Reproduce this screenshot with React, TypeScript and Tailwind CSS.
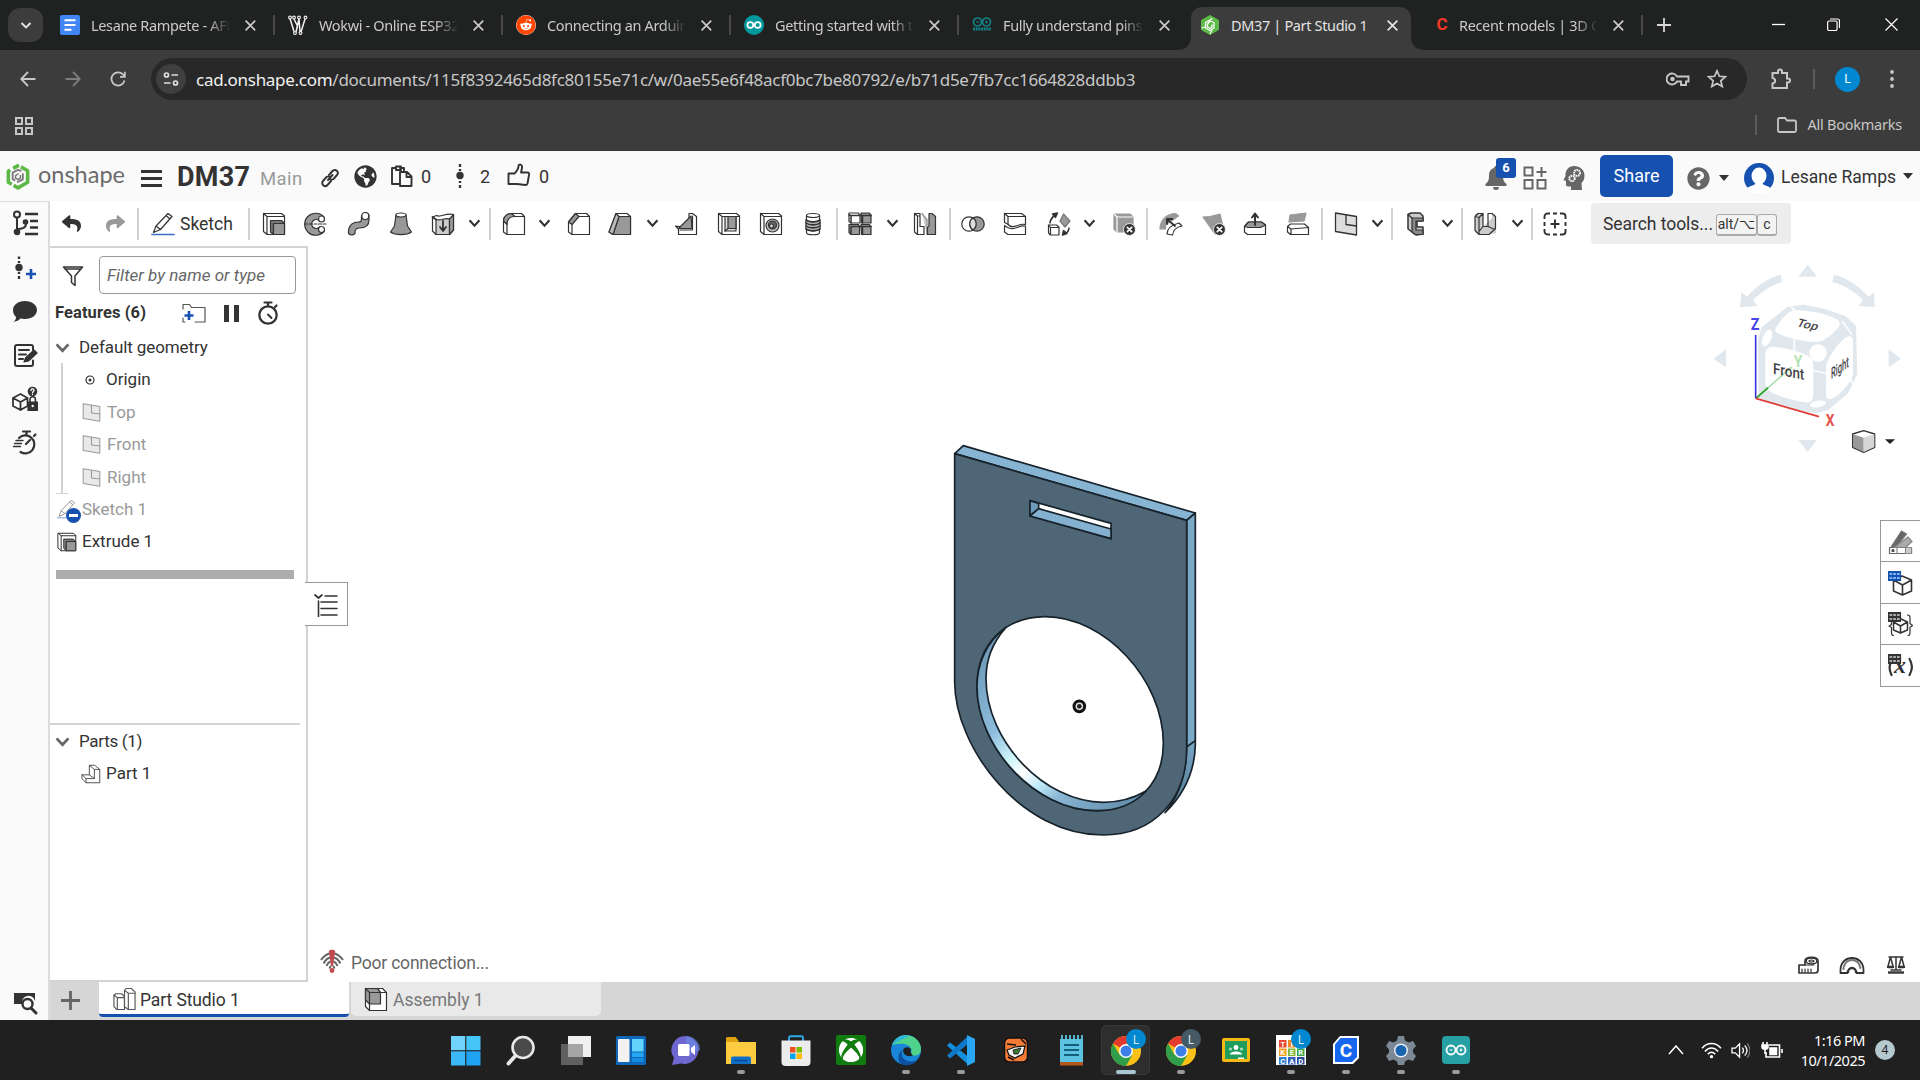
import React from "react";
import { FaGlobeAmericas, FaXbox, FaReddit, FaQuestionCircle, FaReply, FaShare } from "react-icons/fa";

type Kids = { children?: React.ReactNode };

/* 24x24 line icon with the shared CAD stroke style */
function Ic({ children, className = "w-6 h-6", vb = "0 0 24 24" }: Kids & { className?: string; vb?: string }) {
  return (
    <svg viewBox={vb} className={`${className} shrink-0`} fill="none" stroke="#333" strokeWidth="1.2" strokeLinejoin="round" strokeLinecap="round">
      {children}
    </svg>
  );
}

/* ---------- browser chrome ---------- */

const Docs = () => (
  <svg viewBox="0 0 20 20" className="h-5 w-5">
    <rect width="20" height="20" rx="2" fill="#4285f4" />
    <path d="M4.5 5.2h11M4.5 10h11M4.5 14.8h7" stroke="#fff" strokeWidth="2" />
  </svg>
);
const Wokwi = () => (
  <svg viewBox="0 0 20 20" className="h-5 w-5" fill="none" stroke="#f2f2f2" strokeWidth="1.5">
    <path d="M2 3.5l4 13M6 4l3.5 7L8 17M11 4l1 13M17 4l-4 13M11 4l-3 13" />
    <g fill="#202221" strokeWidth="1.1">
      <circle cx="2" cy="2.5" r="1.4" /><circle cx="6" cy="2.5" r="1.4" /><circle cx="11" cy="2.5" r="1.4" /><circle cx="17.5" cy="2.5" r="1.4" />
      <circle cx="7" cy="18" r="1.4" /><circle cx="12.5" cy="18" r="1.4" />
    </g>
  </svg>
);
const Reddit = () => <FaReddit className="h-5 w-5 rounded-full bg-white text-[#ff4500]" />;
const Infinity2 = () => (
  <g fill="none" strokeWidth="1.7">
    <circle cx="6.3" cy="10" r="2.9" />
    <circle cx="13.7" cy="10" r="2.9" />
  </g>
);
const Arduino = () => (
  <svg viewBox="0 0 20 20" className="h-5 w-5" stroke="#fff">
    <circle cx="10" cy="10" r="10" fill="#00979d" stroke="none" />
    <Infinity2 />
  </svg>
);
const Arduino2 = () => (
  <svg viewBox="0 0 20 20" className="h-5 w-5" fill="none" stroke="#128188" strokeWidth="1.7">
    <circle cx="5.5" cy="7" r="4" />
    <circle cx="14.5" cy="7" r="4" />
    <path d="M4 7h3M13 7h3M14.5 5.5v3" strokeWidth="1" />
    <path d="M1 14h18" strokeWidth="3" strokeDasharray="2 .7" />
  </svg>
);
function OnshapeMark({ className, inner }: { className: string; inner: string }) {
  return (
    <svg viewBox="0 0 24 28" className={className} fill="none" strokeLinejoin="round">
      <path d="M13 2.200L7 5.600M4 7.400L2 8.600V20l3.500 2M7.500 23.200l4.500 2.600L22 20V8l-7-4" stroke="#5db947" strokeWidth="3.700" />
      <path d="M15.500 8.500L12 7 6.500 10v6.500l2.500 2M11 20l6-3v-6.500" stroke={inner} strokeWidth="1.900" />
      <path d="M12.500 11L9.500 13v3l2.500 1.200 2.500-1.500V12.500" stroke={inner} strokeWidth="1.500" />
    </svg>
  );
}
const OnshapeFav = () => (
  <svg viewBox="0 0 20 20" className="h-5 w-5" fill="none" strokeLinejoin="round">
    <path d="M10 .5l8.500 4.800v9.400L10 19.500 1.500 14.700V5.300z" fill="#5db947" stroke="#5db947" />
    <path d="M12.500 3.500L5.500 7.500v5.500l4.500 2.500 4-2.500V7.500L10 6 7.500 9v3l2.500 1.500 2-1.500V9.500" stroke="#fff" strokeWidth="1.300" />
    <path d="M10 19l2-4M1.500 13l4-1" stroke="#fff" strokeWidth="1.100" />
  </svg>
);
const RedC = () => (
  <span className="flex h-5 w-5 items-center justify-center pl-2 font-['Roboto',sans-serif] text-[17px] font-bold text-[#f23a2b]">C</span>
);

const tabs = [
  { icon: <Docs />, title: "Lesane Rampete - AFM", sep: true },
  { icon: <Wokwi />, title: "Wokwi - Online ESP32", sep: true },
  { icon: <Reddit />, title: "Connecting an Arduino", sep: true },
  { icon: <Arduino />, title: "Getting started with the", sep: true },
  { icon: <Arduino2 />, title: "Fully understand pins o", sep: false },
  { icon: <OnshapeFav />, title: "DM37 | Part Studio 1", sep: false, active: true },
  { icon: <RedC />, title: "Recent models | 3D CA", sep: true },
];

const Cross = ({ className }: { className: string }) => (
  <svg viewBox="0 0 12 12" className={className} stroke="currentColor" fill="none">
    <path d="M1.500 1.500l9 9M10.500 1.500l-9 9" strokeWidth="1.600" />
  </svg>
);

function TabStrip() {
  return (
    <div className="flex h-[50px] bg-[#202221] pl-2 text-[#c9cac9]">
      <div className="mt-2 flex h-[34px] w-[35px] items-center justify-center rounded-xl bg-[#3b3c3b]">
        <svg viewBox="0 0 12 12" className="h-3 w-3" fill="none" stroke="#e3e3e3" strokeWidth="1.900"><path d="M1.500 4l4.500 4.500L10.500 4" /></svg>
      </div>
      <div className="ml-1 flex">
        {tabs.map((t) => (
          <div key={t.title} className="relative flex h-[50px] w-[228px] items-center pl-[13px]">
            {t.active && (
              <svg viewBox="0 0 248 43" className="absolute -left-[10px] top-[7px] h-[43px] w-[248px]">
                <path d="M0 43c9 0 14-5 14-14V12C14 4 19 0 26 0h196c7 0 12 4 12 12v17c0 9 5 14 14 14z" fill="#3c3c3c" />
              </svg>
            )}
            <span className="relative">{t.icon}</span>
            <span className={`relative ml-[11px] w-[141px] overflow-hidden whitespace-nowrap font-['Noto_Sans',sans-serif] text-[14.500px] leading-6 tracking-[-0.350px] ${t.active ? "text-[#e3e3e3]" : "[mask-image:linear-gradient(to_right,#000_84%,transparent)]"}`}>{t.title}</span>
            <Cross className={`relative ml-[14px] h-[13px] w-[13px] ${t.active ? "text-[#e3e3e3]" : "text-[#c9cac9]"}`} />
            {t.sep && <span className="ml-[16px] h-5 w-[2px] bg-[#474847]" />}
          </div>
        ))}
      </div>
      <div className="flex items-center">
        <svg viewBox="0 0 14 14" className="ml-[14px] h-[14px] w-[14px]" stroke="#d8d8d8" strokeWidth="1.800"><path d="M7 0v14M0 7h14" /></svg>
      </div>
      <div className="ml-auto flex items-center pb-[2px] pr-[22px] text-white">
        <svg viewBox="0 0 13 13" className="h-[13px] w-[13px]" stroke="#fff" strokeWidth="1.300"><path d="M0 6.500h13" /></svg>
        <svg viewBox="0 0 13 13" className="ml-[42px] h-[13px] w-[13px]" fill="none" stroke="#fff" strokeWidth="1.200"><rect x=".6" y="3" width="9.500" height="9.500" rx="1.500" /><path d="M3 1h7.500a2 2 0 0 1 2 2v7" /></svg>
        <svg viewBox="0 0 13 13" className="ml-[45px] h-[13px] w-[13px]" stroke="#fff" strokeWidth="1.200"><path d="M.5 .5l12 12M12.500 .5l-12 12" /></svg>
      </div>
    </div>
  );
}

function AddressBar() {
  return (
    <div className="flex h-[58px] items-center bg-[#3c3c3c] pl-5">
      <svg viewBox="0 0 16 16" className="h-4 w-4" fill="none" stroke="#c7c7c7" strokeWidth="1.800"><path d="M15.500 8H1.500M8 1L1.200 8 8 15" /></svg>
      <svg viewBox="0 0 16 16" className="ml-[29px] h-4 w-4" fill="none" stroke="#7d7d7d" strokeWidth="1.800"><path d="M.5 8h14M8 1l6.800 7L8 15" /></svg>
      <svg viewBox="0 0 16 16" className="ml-[29px] h-4 w-4" fill="none" stroke="#c7c7c7" strokeWidth="1.800"><path d="M14.500 9.500A6.600 6.600 0 1 1 13 3.500L14.800 5.500M14.800.8v5H10" /></svg>
      <div className="ml-[25px] flex h-[42px] w-[1596px] items-center rounded-full bg-[#282828] pl-[5px]">
        <span className="flex h-[30px] w-[30px] items-center justify-center rounded-full bg-[#3f3f3f]">
          <svg viewBox="0 0 16 16" className="h-4 w-4" fill="none" stroke="#dedede" strokeWidth="1.700"><circle cx="3.500" cy="4" r="2" /><path d="M8.500 4H15M1 12h6.500" /><circle cx="12.500" cy="12" r="2" /></svg>
        </span>
        <span className="ml-[10px] whitespace-nowrap pt-[1px] font-['Noto_Sans',sans-serif] text-[17px] tracking-[-0.285px] text-[#c7c7c7]">
          <span className="text-[#f1f1f1]">cad.onshape.com</span>/documents/115f8392465d8fc80155e71c/w/0ae55e6f48acf0bc7be80792/e/b71d5e7fb7cc1664828ddbb3
        </span>
        <div className="ml-auto flex items-center pr-5">
          <svg viewBox="0 0 24 14" className="h-[14px] w-6" fill="none" stroke="#c7c7c7" strokeWidth="1.900"><path d="M11 4.500A5.500 5.500 0 1 0 11 9.500h4V13h5V9.500h2.500v-5z" /><circle cx="6.500" cy="7" r="1.300" fill="#c7c7c7" /></svg>
          <svg viewBox="0 0 20 20" className="ml-[17px] h-5 w-5" fill="none" stroke="#c7c7c7" strokeWidth="1.700"><path d="M10 1.800l2.400 5.500 6 .5-4.600 4 1.400 5.800L10 14.500l-5.200 3.100 1.400-5.800-4.600-4 6-.5z" /></svg>
        </div>
      </div>
      <svg viewBox="0 0 22 22" className="ml-[23px] h-[22px] w-[22px]" fill="none" stroke="#c7c7c7" strokeWidth="2"><path d="M2.500 5H8V3.500a2 2 0 0 1 4 0V5h5v5.500h1a2 2 0 0 1 0 4h-1V20H2.500v-4.500c3.500-.500 3.500-5 0-5.500z" /></svg>
      <span className="ml-[21px] h-5 w-[2px] bg-[#5c5c5c]" />
      <span className="ml-[20px] flex h-[25px] w-[25px] items-center justify-center rounded-full bg-[#0288d1] font-['Noto_Sans',sans-serif] text-[13px] text-white">L</span>
      <svg viewBox="0 0 4 18" className="ml-[30px] h-[18px] w-1" fill="#c7c7c7"><circle cx="2" cy="2" r="1.900" /><circle cx="2" cy="9" r="1.900" /><circle cx="2" cy="16" r="1.900" /></svg>
    </div>
  );
}

function BookmarksBar() {
  return (
    <div className="flex h-[43px] items-center border-b border-[#353535] bg-[#3c3c3c] pb-[9px] pl-[15px] pr-[18px]">
      <svg viewBox="0 0 18 18" className="mt-[2px] h-[18px] w-[18px]" fill="none" stroke="#c7c7c7" strokeWidth="2"><path d="M1 1h6v6H1zM11 1h6v6h-6zM1 11h6v6H1zM11 11h6v6h-6z" /></svg>
      <span className="ml-auto h-5 w-[2px] bg-[#5c5c5c]" />
      <svg viewBox="0 0 20 16" className="ml-[20px] h-4 w-5" fill="none" stroke="#c7c7c7" strokeWidth="1.800"><path d="M1 2.500A1.500 1.500 0 0 1 2.500 1H8l2 2.500h7.500A1.500 1.500 0 0 1 19 5v8.500a1.500 1.500 0 0 1-1.500 1.500h-15A1.500 1.500 0 0 1 1 13.500z" /></svg>
      <span className="ml-[10px] font-['Noto_Sans',sans-serif] text-[14.500px] tracking-[-0.230px] text-[#c7c7c7]">All Bookmarks</span>
    </div>
  );
}

/* ---------- document header ---------- */

const Caret = ({ className = "" }: { className?: string }) => (
  <span className={`h-0 w-0 border-x-[5px] border-t-[6px] border-x-transparent border-t-[#333] ${className}`} />
);

function DocHeader() {
  return (
    <div className="flex h-[50px] items-center bg-[#fafafa] pl-[6px] text-[#333]">
      <OnshapeMark className="h-[27px] w-[24px]" inner="#777" />
      <span className="ml-[8px] w-[86px] whitespace-nowrap pb-[3px] font-['Lato',sans-serif] text-[23.500px] leading-none text-[#6b6b6b]">onshape</span>
      <span className="ml-[17px] mt-[4px] flex w-[21px] flex-col gap-[4px]">
        <i className="h-[3px] bg-[#333]" /><i className="h-[3px] bg-[#333]" /><i className="h-[3px] bg-[#333]" />
      </span>
      <span className="ml-[15px] mt-[2px] w-[73px] text-[27px] font-bold leading-none tracking-[0.300px]">DM37</span>
      <span className="ml-[10px] mt-[7px] w-[42px] text-[18.500px] leading-none tracking-[0.400px] text-[#999]">Main</span>
      <Ic className="ml-[18px] mt-1 h-5 w-5" vb="0 0 20 20">
        <path d="M8 12l4.500-5M9 7l3.500-4a3 3 0 0 1 4.500 4l-3.500 4a3 3 0 0 1-3.500 0M11 13l-3.500 4A3 3 0 0 1 3 13l3.500-4A3 3 0 0 1 10 9" strokeWidth="1.900" />
      </Ic>
      <FaGlobeAmericas className="ml-[14px] h-[23px] w-[23px]" />
      <Ic className="ml-[14px] h-[22px] w-[22px]" vb="0 0 22 22">
        <path d="M8 19H1V3h4M9 3h4v3M5 1.500h5V5H5z" strokeWidth="1.900" /><path d="M9 7h7l4.500 4.500V21H9zM15.500 7v5h5" strokeWidth="1.900" fill="#fafafa" />
      </Ic>
      <span className="ml-[8px] w-[11px] text-[18px]">0</span>
      <Ic className="ml-[24px] h-6 w-2" vb="0 0 8 24">
        <circle cx="4" cy="11.500" r="3.700" fill="#333" stroke="none" /><path d="M4 0v3M4 5v2M4 17v2M4 21v3" strokeWidth="2.400" strokeLinecap="butt" />
      </Ic>
      <span className="ml-[16px] w-[11px] text-[18px]">2</span>
      <Ic className="ml-[16px] mb-[3px] h-6 w-6" vb="0 0 24 24">
        <path d="M1.500 10.500h6C10 8 11.500 6 11.500 3c0-2 4-2.500 3.500 2l-1 4.500h6.500c1.500 0 2 1.500 1.500 2.500l-1.500 8.500c-.3 1-1 1.500-2 1.500L10 21H1.500z" strokeWidth="1.900" />
      </Ic>
      <span className="ml-[8px] w-[11px] text-[18px]">0</span>

      <div className="ml-auto flex h-full items-center pr-[7px]">
        <div className="relative h-[28px] w-[32px]">
          <svg viewBox="0 0 22 24" className="absolute left-0 top-[4px] h-6 w-[22px]" fill="#666"><path d="M11 0c1.200 0 2 .8 2 2 3.500 1 5 4 5 7.500 0 5 1 6.500 3.500 8.500v2h-21v-2C3 16 4 14.500 4 9.500 4 6 5.500 3 9 2c0-1.200.8-2 2-2zM8 21h6a3 3 0 0 1-6 0z" /></svg>
          <span className="absolute -top-[4px] left-[11px] flex h-5 w-5 items-center justify-center rounded-[3px] bg-[#1651b0] text-[13px] font-bold text-white">6</span>
        </div>
        <svg viewBox="0 0 24 24" className="ml-[6px] mt-1 h-6 w-6" fill="none" stroke="#666" strokeWidth="2"><path d="M1.500 1.500h8v8h-8zM1.500 14h8v8.500h-8zM14.500 14h8v8.500h-8zM18.500 1v10M13.500 6h10" /></svg>
        <svg viewBox="0 0 22 24" className="ml-[16px] mt-1 h-6 w-[22px]" fill="#666">
          <path d="M11 0c6 0 10.500 4 10.500 9.500 0 4-1.500 6-3 7.500l.5 7H8v-3.500H5c-1.500 0-2-1-2-2V15L.5 14 2.500 10C2 4 6 0 11 0z" />
          <circle cx="9" cy="12.500" r="2.700" fill="none" stroke="#fafafa" strokeWidth="2" strokeDasharray="1.600 .6" /><circle cx="14" cy="7" r="3" fill="none" stroke="#fafafa" strokeWidth="2" strokeDasharray="1.600 .6" />
        </svg>
        <span className="ml-[15px] flex h-[42px] w-[73px] items-center justify-center rounded-[5px] bg-[#1651b0] pb-[1px] text-[18px] text-white">Share</span>
        <FaQuestionCircle className="ml-[14px] mt-1 h-[23px] w-[23px] text-[#666]" />
        <Caret className="ml-[9px] mt-1" />
        <svg viewBox="0 0 30 30" className="ml-[15px] mt-1 h-[30px] w-[30px]">
          <circle cx="15" cy="15" r="15" fill="#1651b0" /><ellipse cx="15" cy="13" rx="7.500" ry="8.500" fill="#fff" /><path d="M3 26c2-4 8-3 8.500-6h7c.5 3 6.500 2 8.500 6a15 15 0 0 1-24 0z" fill="#fff" />
        </svg>
        <span className="ml-[7px] mt-[2px] w-[113px] whitespace-nowrap text-[17.500px]">Lesane Ramps</span>
        <Caret className="ml-[9px]" />
      </div>
    </div>
  );
}

/* ---------- CAD toolbar icons ---------- */

const G = "#999";
const ExtrudeShape = () => (
  <>
    <path d="M1.500 1.500h18l3 2.500v18.500H5l-3.500-3zM1.500 1.500L5 4.500v18M5 4.500h17.500" fill="#fff" />
    <path d="M8.500 8.500h11l3 3H11.500v11L8.500 20z" fill="#777" /><path d="M11.500 11.500H22.500v11h-11z" fill={G} />
  </>
);
const Box = () => <path d="M1.500 1.500h18l3 2.500v18.500H5l-3.500-3zM1.500 1.500L5 4.500v18M5 4.500h17.500" fill="#fff" />;
const PlaneShape = ({ s = "#333", f = "#ddd" }: { s?: string; f?: string }) => (
  <g stroke={s} fill={f} strokeWidth="1.300"><path d="M1.500 1l21 3.500v18.500l-21-3.500z" /><path d="M12 3v9.500l10.500 1.500" fill="none" /></g>
);
const ReplaceX = () => (
  <g><circle cx="17.500" cy="17.500" r="6" fill="#333" stroke="#fff" strokeWidth=".8" /><path d="M15.300 15.300l4.400 4.400M19.700 15.300l-4.400 4.400" stroke="#fff" strokeWidth="1.700" /></g>
);

const icons: Record<string, React.ReactNode> = {
  extrude: <ExtrudeShape />,
  revolve: <><path d="M20 5A11 11 0 1 0 20 19.500L15.500 15a4.500 4.500 0 1 1 0-6z" fill={G} /><circle cx="17.500" cy="7" r="3" fill="#fff" /><circle cx="17.500" cy="17.500" r="3" fill="#fff" /><path d="M1 12h22" strokeDasharray="3 1.500" /></>,
  sweep: <><path d="M14.500 3.500v4c0 2-1 2.500-3 2.500-5 0-9 2-10 8.500v3c2 2 4.500 2 6.500 0v-2c.5-3 2-3.500 4.500-3.500 6 0 9.500-2 9.500-8v-5" fill={G} /><circle cx="18.300" cy="4" r="3.500" fill="#fff" /></>,
  loft: <><path d="M7 3l-1.500 11L1.500 20c5 3.500 16 3.500 21 0l-4-6L17 3z" fill={G} /><ellipse cx="12" cy="3" rx="5" ry="2" fill="#fff" /></>,
  importer: <><path d="M1.500 5l4-1.500c5 2.500 8-3 17-1V18l-4 4.500H5L1.500 19z" fill="#fff" /><path d="M5 7.500c5 1.500 9-2 13.500-.5v15.500H5z" fill="#ccc" /><path d="M18.500 7l4-4.500V18l-4 4.500z" fill={G} /><path d="M1.500 5L5 7.500M12 9v9M9 15l3 4 3-4" strokeWidth="1.800" /></>,
  fillet: <><path d="M1.500 20V9c0-5 4-7.500 8-7.500h10l3 3v18H5z" fill="#fff" /><path d="M1.500 9c0-5 4-7.500 8-7.500L13 4.500C8 4.500 5 7 5 12.500z" fill={G} /><path d="M5 12.500v10M13 4.500h9.500" /></>,
  chamfer: <><path d="M1.500 20V10l7-8.500h11l3 3v18H5z" fill="#fff" /><path d="M1.500 10l7-8.500L12 4.500l-7 8z" fill={G} /><path d="M5 12.500v10M12 4.500h10.500" /></>,
  draft: <><path d="M1 20l7-18.500h11l3.500 3v18H5z" fill="#fff" /><path d="M11 4.500h11.500v18H5z" fill={G} /><path d="M1 20l7-18.500 3 3-6 18z" fill="#bbb" /></>,
  rib: <><path d="M1.500 14l3 3v5.500h18V4.500l-4-3H15v13H5z" fill="#fff" /><path d="M17 4L4.500 16.500H18z" fill={G} /><path d="M18.500 4v14H6" /></>,
  shell: <><Box /><path d="M8 4.500h11v14.500H8z" fill="#ddd" /><path d="M11 4.500h8v12h-8z" fill={G} /><path d="M8 19l3-2.500" /></>,
  hole: <><Box /><circle cx="13.500" cy="13.500" r="6.500" fill="#bbb" /><circle cx="13.500" cy="13" r="4" fill="#666" /><circle cx="12.500" cy="14" r="2" fill="#ddd" /></>,
  thread: <><path d="M5.500 3.500v17c0 3 13 3 13 0v-17" fill="#fff" /><path d="M5 8c3 2.500 11 2.500 14 0v9c-3 2.500-11 2.500-14 0z" fill="#bbb" /><ellipse cx="12" cy="3.500" rx="6.500" ry="2" fill="#fff" /><path d="M5 8c3 2.500 11 2.500 14 0M5 11c3 2.500 11 2.500 14 0M5 14c3 2.500 11 2.500 14 0M5 17c3 2.500 11 2.500 14 0" strokeWidth="1.600" /></>,
  pattern: <><path d="M1 1h9l2 2v8H3L1 9.500z" fill="#fff" /><path d="M13 1h8l2 2v8h-9.500zM1 12.500h9.500l1 2v8H3l-2-2zM13 12.500h8l2 2v8h-9.500z" fill={G} /><path d="M1 3l2 .5h9M3 3.500V11M13 3.500h10M3 14.500h20M14.500 4v7M14.500 14.500v8M3 15v7" strokeWidth="1.500" /></>,
  mirror: <><path d="M1.500 1.500H7v13h4v8H4.500l-3-2.500zM1.500 1.500l3 2.500v18.500M4.500 4H7" fill="#fff" /><path d="M9 1.500l5 6v15" strokeDasharray="2 1" fill="#ccc" stroke="#888" /><path d="M22.500 4.500L19 1.500h-3v12l-1.500 2v7h8z" fill={G} /></>,
  boolean: <><circle cx="8" cy="12" r="7.200" fill="#fff" /><circle cx="16" cy="12" r="7.200" fill={G} /><path d="M12 6a7.200 7.200 0 0 1 0 12 7.200 7.200 0 0 1 0-12" fill="#ddd" /></>,
  split: <><path d="M1.500 10.500V1.500h17l4 3v8c-7-2-12 6-18-.5z" fill="#fff" /><path d="M1.500 1.500L5 4.500h17.500M5 4.500v8" /><path d="M1.500 13.500l3 2c8 4 11-3 18-1.500v8.500H5L1.500 20z" fill="#fff" /></>,
  transform: <><path d="M1.500 13h8l2.500 2v8H3.500l-2-2zM1.500 13l2 2.500H12M3.500 15.500V23" fill="#fff" /><path d="M16.500 2l6.500 7-5 6-5-6z" fill={G} stroke="#777" /><path d="M3 11c0-4 2-6 5-8M5.500 2l5-1-2 4.500z" fill="#333" strokeWidth="1.400" /><path d="M22 16c0 3-1.500 4.500-3.500 6M15.500 23l1-4.500 3.500 3z" fill="#333" strokeWidth="1.400" /></>,
  deletePart: <><path d="M2 2h16l3 3v15H5l-3-3z" fill={G} stroke={G} /><path d="M5 20V5h16M2 2l3 3" stroke="#fff" /><ReplaceX /></>,
  modFillet: <><path d="M1 17C1 8 8 1.500 16.500 1.500l3 2.500-13 9v4z" fill={G} stroke={G} /><path d="M8 22c0-5 4-9 12-11l3 3c-6 1-9 5-9.500 9z" fill="#fff" /><path d="M16 14L9 8M8 12V7h5.500" strokeWidth="1.900" /></>,
  delFace: <><path d="M1 5l7-.5L18 2l3 13-8 7z" fill={G} stroke={G} /><ReplaceX /></>,
  moveFace: <><path d="M1.500 14.500l4-4.500h13l4 3v9.500h-18L1.500 20z" fill="#fff" /><path d="M1.500 14.500l4-4.500h13l4 3-5 2.500H5z" fill={G} /><path d="M12 13V3M9 5.500l3-4 3 4" strokeWidth="2" /></>,
  replFace: <><path d="M4 3l16-2-2 8-15 1z" fill={G} stroke={G} /><path d="M1.500 14.500l3-2.500h14l4 3.500v7h-18l-3-2.500zM1.500 14.500l3.500 2.500 17.500-1.500M5 17v5.500" fill="#fff" /></>,
  plane: <PlaneShape />,
  frame: <><path d="M4 2.500L7 1h9l3 3v5h-6v6h6v7l-7 1-8-6z" fill="#ccc" strokeWidth="1.500" /><path d="M8 6h11v3h-7v9h7v4.500H11L8 20z" fill="#888" /><path d="M4 2.500L8 6" /></>,
  sheet: <><path d="M2 2l5-1 3 3v11l9-9V2l4 3v16l-8 1.500H7L2 18z" fill="#ccc" stroke="none" /><path d="M5 1.500h5v13M5 1.500L2 4.500v14l4 4h10l6.500-6V4.500L19 1.500h-4v13M2 4.500l4 1v17M10 14.500l-4 5M10 14.500h5l7 3M6 5.500l4-4" /></>,
  custom: <path d="M1.500 7V4.500a3 3 0 0 1 3-3H7M10 1.500h4M17 1.500h2.500a3 3 0 0 1 3 3V7M22.500 10v4M22.500 17v2.500a3 3 0 0 1-3 3H17M14 22.500h-4M7 22.500H4.500a3 3 0 0 1-3-3V17M1.500 14v-4M12 7.500v9M7.500 12h9" strokeWidth="1.900" strokeLinecap="butt" />,
};

const tools: [string, string][] = [
  ["sep", "ml-[15px]"], ["extrude", "ml-[12px]"], ["revolve", "ml-[18px]"], ["sweep", "ml-[19px]"], ["loft", "ml-[18px]"], ["importer", "ml-[18px]"], ["chev", "ml-[12px]"],
  ["sep", "ml-[8px]"], ["fillet", "ml-[11px]"], ["chev", "ml-[11px]"], ["chamfer", "ml-[16px]"], ["draft", "ml-[17px]"], ["chev", "ml-[13px]"], ["rib", "ml-[15px]"], ["shell", "ml-[19px]"], ["hole", "ml-[18px]"], ["thread", "ml-[18px]"],
  ["sep", "ml-[11px]"], ["pattern", "ml-[10px]"], ["chev", "ml-[13px]"], ["mirror", "ml-[14px]"],
  ["sep", "ml-[12px]"], ["boolean", "ml-[10px]"], ["split", "ml-[18px]"], ["transform", "ml-[20px]"], ["chev", "ml-[11px]"], ["deletePart", "ml-[16px]"],
  ["sep", "ml-[10px]"], ["modFillet", "ml-[11px]"], ["delFace", "ml-[19px]"], ["moveFace", "ml-[17px]"], ["replFace", "ml-[19px]"],
  ["sep", "ml-[11px]"], ["plane", "ml-[11px]"], ["chev", "ml-[12px]"],
  ["sep", "ml-[7px]"], ["frame", "ml-[11px]"], ["chev", "ml-[12px]"],
  ["sep", "ml-[7px]"], ["sheet", "ml-[10px]"], ["chev", "ml-[13px]"],
  ["sep", "ml-[7px]"], ["custom", "ml-[10px]"],
];

const PencilShape = ({ s = "#333", l = "#3a6fc9" }: { s?: string; l?: string }) => (
  <><path d="M2.500 20.500L5 14 17 1.500l4 3L9.500 17.500zM5 14l4.500 3.500M15 3.500l4 3.500" stroke={s} /><path d="M1 22.500h22" stroke={l} strokeWidth="1.700" /></>
);

function Toolbar() {
  return (
    <div className="flex h-[45px] items-center text-[#333]">
      <FaReply className="ml-[12px] mr-[2px] h-[19px] w-[19px] shrink-0" />
      <FaShare className="ml-[23px] mr-[2px] h-[19px] w-[19px] shrink-0 text-[#999]" />
      <span className="ml-[10px] h-8 w-[2px] shrink-0 bg-[#d3d3d3]" />
      <Ic className="ml-[12px] h-6 w-6"><PencilShape /></Ic>
      <span className="ml-[5px] w-[53px] shrink-0 pt-[2px] text-[17.500px]">Sketch</span>
      {tools.map(([name, gap], i) =>
        name === "sep" ? (
          <span key={i} className={`${gap} h-8 w-[2px] shrink-0 bg-[#d3d3d3]`} />
        ) : name === "chev" ? (
          <span key={i} className={`${gap} flex w-[14px] shrink-0 justify-center`}>
            <svg viewBox="0 0 14 10" className="h-[9px] w-[13px]" fill="none" stroke="#333" strokeWidth="2.400"><path d="M1.500 1.500L7 7.500l5.500-6" /></svg>
          </span>
        ) : (
          <span key={i} className={`${gap} h-6 w-6 shrink-0`}><Ic>{icons[name]}</Ic></span>
        )
      )}
      <div className="ml-[24px] flex h-[41px] w-[200px] shrink-0 items-center rounded-[4px] bg-[#ededed] pl-[12px]">
        <span className="w-[113px] whitespace-nowrap pt-[2px] text-[17.500px] tracking-[-0.050px]">Search tools...</span>
        <kbd className="mt-[3px] flex h-[22px] w-[41px] items-center justify-center whitespace-nowrap rounded-[3px] border border-b-2 border-[#aaa] bg-[#f3f3f3] font-['Roboto','DejaVu_Sans',sans-serif] text-[14px]">alt/⌥</kbd>
        <kbd className="mt-[3px] flex h-[22px] w-[20px] items-center justify-center rounded-[3px] border border-b-2 border-[#aaa] bg-[#f3f3f3] font-['Roboto',sans-serif] text-[14px]">c</kbd>
      </div>
    </div>
  );
}

/* ---------- left rail and feature list ---------- */

function LeftRail() {
  return (
    <div className="flex w-[50px] shrink-0 flex-col items-center border-r-2 border-t border-[#dcdcdc] bg-[#fafafa] pl-[1px] pt-[8px]">
      <Ic className="h-[26px] w-[26px]" vb="0 0 26 26"><circle cx="5" cy="4.500" r="3" strokeWidth="2" /><path d="M5 8v12M5 19c6 0 9-2 9-5" strokeWidth="2" /><circle cx="5" cy="22" r="2.700" fill="#333" /><circle cx="13.500" cy="12" r="2.200" fill="#333" /><path d="M13 4h13M18 11h8M18 17.500h8M13 24h13" strokeWidth="2.400" strokeLinecap="butt" /></Ic>
      <Ic className="mt-[20px] h-[26px] w-[26px]" vb="0 0 26 26"><circle cx="7" cy="11.500" r="3.700" fill="#333" stroke="none" /><path d="M7 .5v2.500M7 5v2M7 16v2M7 20v3" strokeWidth="2.400" strokeLinecap="butt" /><path d="M19 13v10M14 18h10" stroke="#1651b0" strokeWidth="2.600" strokeLinecap="butt" /></Ic>
      <Ic className="mt-[17px] h-[25px] w-[26px]" vb="0 0 26 25"><path d="M13 2c7 0 12 4 12 9s-5 9-12 9c-2 0-3-.2-4.500-.5C6.500 21.500 5 22 1.500 23c2-2 2.500-3 2.500-5-2-1.700-3-4-3-7 0-5 5-9 12-9z" fill="#333" stroke="none" /></Ic>
      <Ic className="mt-[18px] h-[26px] w-[26px]" vb="0 0 26 26"><path d="M21 18.500V22a2 2 0 0 1-2 2H5a2 2 0 0 1-2-2V5a2 2 0 0 1 2-2h14a2 2 0 0 1 2 2v3M7 8h10M7 12.500h7M7 17h4" strokeWidth="2" /><path d="M12 20l1.500-4L22 8l3 3-8.500 8z" fill="#333" /></Ic>
      <Ic className="mt-[18px] h-[26px] w-[26px]" vb="0 0 26 26"><path d="M1 12l7.500-4 7 4v8l-7 4L1 20zM1 12l7.500 4 7-4M8.500 16v8" strokeWidth="1.800" /><circle cx="20.500" cy="5.500" r="4.800" fill="#333" stroke="none" /><path d="M19 4.500c0-2.500 3-2 3-.3 0 1.300-1.500 1.200-1.500 2.600M20.500 8.300v.3" stroke="#fff" strokeWidth="1.300" /><path d="M16 16h9.500v8.500H16z" fill="#333" /><path d="M18 16v-2.500a2.700 2.700 0 0 1 5.400 0V16" strokeWidth="1.600" /><circle cx="20.700" cy="20" r="1.200" fill="#fff" stroke="none" /></Ic>
      <Ic className="mt-[18px] h-[26px] w-[26px]" vb="0 0 26 26"><path d="M7 8a9 9 0 1 1 1.500 14M14.500 5V2M11 1.500h7M22 6l1.500-1.500" strokeWidth="2.200" /><path d="M14 14l4-4" strokeWidth="2.200" /><path d="M4 10.500h7M2.500 13.500h7M1.500 16.500h7" strokeWidth="1.400" /></Ic>
      <Ic className="mb-[4px] mt-auto h-[26px] w-[26px]" vb="0 0 26 26"><path d="M2 4h21v8a6.500 6.500 0 0 0-13 3H2z" fill="#333" stroke="none" /><circle cx="15.500" cy="15" r="5" strokeWidth="2.400" fill="#fafafa" /><path d="M19 19l5 5" strokeWidth="3" /></Ic>
      <span className="h-[1px]" />
    </div>
  );
}

const Chevron = () => (
  <svg viewBox="0 0 16 11" className="h-[10px] w-[15px]" fill="none" stroke="#666" strokeWidth="3"><path d="M1.500 1.500L8 8.500l6.500-7" /></svg>
);

function FeaturePanel() {
  return (
    <div className="relative z-10 flex w-[258px] shrink-0 flex-col border-b-2 border-r-2 border-t-2 border-[#d3d3d3] bg-white text-[17px] text-[#333]">
      <div className="mt-[8px] flex h-[38px] items-center pl-[12px]">
        <Ic className="mt-[2px] h-[22px] w-[22px]" vb="0 0 22 22"><path d="M1.500 2h19L13 11v9.500l-3.500-3V11zM3 4h16" strokeWidth="1.500" /></Ic>
        <div className="ml-[15px] flex h-[38px] w-[197px] items-center rounded-[4px] border border-[#999] pl-[7px] italic text-[#666]">
          <span className="whitespace-nowrap pt-[1px] text-[17px]">Filter by name or type</span>
        </div>
      </div>
      <div className="mt-[4px] flex h-[30px] items-center pl-[5px]">
        <span className="w-[127px] text-[16.500px] font-bold tracking-[0.100px]">Features (6)</span>
        <Ic className="h-[22px] w-6" vb="0 0 24 22"><path d="M1 7V2.500h6.500l2 3H23V20H13M1 16v4h2" strokeWidth="1.200" stroke="#555" /><path d="M7 9v9M2.500 13.500h9" stroke="#1651b0" strokeWidth="2.600" strokeLinecap="butt" /></Ic>
        <span className="ml-[18px] flex gap-[5px]"><i className="h-[17px] w-[5px] bg-[#333]" /><i className="h-[17px] w-[5px] bg-[#333]" /></span>
        <Ic className="ml-[18px] h-[24px] w-[22px]" vb="0 0 22 24"><circle cx="11" cy="14" r="8.700" strokeWidth="2.300" /><path d="M11 5V2M7.500 1.500h7M18 6l1.500-1.500" strokeWidth="2.200" /><path d="M11 13.500l3.500 3.500" strokeWidth="2" /></Ic>
      </div>
      <div className="mt-[5px] flex h-[30px] items-center pl-[5px]"><Chevron /><span className="ml-[9px] tracking-[-0.100px]">Default geometry</span></div>
      <div className="flex">
        <div className="ml-[11px] h-[130px] w-[2px] bg-[#d3d3d3]" />
        <div className="flex-1">
          <div className="flex h-[33px] items-center pl-[22px]">
            <Ic className="h-[10px] w-[10px]" vb="0 0 10 10"><circle cx="5" cy="5" r="4" /><circle cx="5" cy="5" r="1.500" fill="#333" stroke="none" /></Ic>
            <span className="ml-[11px]">Origin</span>
          </div>
          {["Top", "Front", "Right"].map((n) => (
            <div key={n} className="flex h-[32.500px] items-center pl-[19px] text-[#999]">
              <Ic className="h-[19px] w-[19px]"><PlaneShape s="#999" f="#e9e9e9" /></Ic>
              <span className="ml-[6px]">{n}</span>
            </div>
          ))}
        </div>
      </div>
      <span className="-mt-[1px] ml-[6px] h-[1px] w-[12px] bg-[#d3d3d3]" />
      <div className="flex h-[32px] items-center pl-[7px] text-[#999]">
        <span className="relative h-[22px] w-[25px]">
          <Ic className="h-[20px] w-[20px]"><PencilShape s="#999" l="#a8c0e8" /></Ic>
          <span className="absolute left-[9px] top-[9px] flex h-[15px] w-[15px] items-center justify-center rounded-full bg-[#1651b0]"><i className="h-[3px] w-[9px] bg-white" /></span>
        </span>
        <span>Sketch 1</span>
      </div>
      <div className="flex h-[33px] items-center pl-[7px]">
        <Ic className="h-[20px] w-[20px]"><ExtrudeShape /></Ic><span className="ml-[5px]">Extrude 1</span>
      </div>
      <div className="ml-[6px] mt-[11px] h-[9px] w-[238px] bg-[#adadad]" />
      <div className="mt-auto h-[2px] w-[250px] bg-[#d3d3d3]" />
      <div className="h-[255px] pt-[1px]">
        <div className="flex h-[32px] items-center pl-[5px]"><Chevron /><span className="ml-[9px] tracking-[-0.300px]">Parts (1)</span></div>
        <div className="flex h-[32px] items-center pl-[31px]">
          <Ic className="h-[20px] w-[20px]"><path d="M1.500 13h8.500V1.500h6.500l6 5v16H6L1.500 18z" fill="#fff" stroke="#555" /><path d="M1.500 13L6 17.500v5M6 17.500h10M10 13l6 4.500V6.500h6.500M10 1.500l6 5" stroke="#555" /></Ic>
          <span className="ml-[5px]">Part 1</span>
        </div>
      </div>
      <div className="absolute left-[255px] top-[334px] flex h-[44px] w-[43px] items-center justify-center border-y border-r border-[#999] bg-white">
        <Ic className="mt-[2px] h-6 w-6" vb="0 0 24 24"><path d="M11 3h12M7 9h16M7 15.500h16M7 22h16M4.500 8v15.500" strokeWidth="1.600" /><path d="M1 2l3.500 3L8 2" strokeWidth="1.700" /></Ic>
      </div>
    </div>
  );
}

/* ---------- 3D canvas ---------- */

function Part() {
  return (
    <svg viewBox="0 0 930 1290" className="absolute left-[612px] top-[174px] h-[430px] w-[310px]" stroke="#17222b" strokeWidth="5" strokeLinejoin="round">
      <defs>
        <linearGradient id="bore" x1="175" y1="700" x2="640" y2="1170" gradientUnits="userSpaceOnUse">
          <stop offset="0" stopColor="#6f9ab8" /><stop offset=".3" stopColor="#8cbbdb" /><stop offset=".44" stopColor="#cdf5fa" /><stop offset=".53" stopColor="#ffffff" /><stop offset=".62" stopColor="#bfeaf8" /><stop offset=".72" stopColor="#8ab6d3" /><stop offset="1" stopColor="#5f8aa8" />
        </linearGradient>
        <linearGradient id="edge" x1="0" y1="960" x2="0" y2="1180" gradientUnits="userSpaceOnUse">
          <stop offset="0" stopColor="#7ba8c6" /><stop offset="1" stopColor="#4f7590" />
        </linearGradient>
      </defs>
      <path d="M104 101L130 77 826 279 800 301z" fill="#87b4d3" />
      <path d="M800 301L826 279V975C824 1055 790 1125 735 1178 775 1130 798 1060 800 985z" fill="url(#edge)" />
      <path fillRule="evenodd" d="M104 101L800 301V985C800 1140 700 1245 550 1245 300 1245 104 980 104 785zM171 800C171 675 250 592 375 590 555 590 730 780 730 970 730 1090 650 1172 530 1172 345 1172 171 980 171 800zM330 242V288L573 356V310z" fill="#4e6676" />
      <path d="M171 800C171 730 200 665 258 622 215 670 198 720 198 775 198 965 375 1147 550 1147 600 1147 640 1135 678 1113 645 1150 592 1172 530 1172 345 1172 171 980 171 800z" fill="url(#bore)" />
      <path d="M330 242V288L356 266V250z" fill="#6d9aba" />
      <path d="M330 288L356 266 573 327V356z" fill="#84b1d0" />
      <path d="M800 981L826 962" />
      <circle cx="478" cy="859" r="16" fill="#ddd" stroke="#111" strokeWidth="9" />
      <circle cx="478" cy="859" r="7" fill="#222" stroke="none" />
    </svg>
  );
}

function ViewCube() {
  return (
    <svg viewBox="0 0 720 720" className="absolute right-0 top-[-6px] h-[240px] w-[240px] font-['Roboto',sans-serif]">
      <g fill="#e0e8ee">
        <path d="M383 74l28 36h-56zM383 636l28-36h-56zM101 356l37-28v54zM663 356l-37-28v54z" />
        <path d="M302 104l5 22c-36 10-60 28-88 54l14 18-53 4 4-45 17 13c30-32 62-56 101-66zM462 104l-5 22c38 10 64 28 92 54l-14 18 49 4-2-45-16 13c-30-32-62-56-104-66z" />
        <path d="M250 265L325 206 372 200 430 212 495 234 522 260 526 400 508 440 500 455 440 506 405 514 290 490 242 470 240 300z" stroke="#e0e8ee" strokeWidth="12" strokeLinejoin="round" />
      </g>
      <g fill="#fff">
        <path d="M335 213c18-7 100 5 135 25 16 10 8 22 0 30-18 20-40 38-65 38-30 0-80-12-108-24-16-8-12-16-6-24 12-18 28-38 44-45z" />
        <path d="M256 345c0-16 8-26 24-25 35 4 70 12 100 26 16 8 20 16 20 32v84c0 18-8 28-26 25-34-6-70-16-96-28-14-8-22-16-22-32z" />
        <path d="M438 385c0-25 35-78 62-94 12-6 19 0 19 12v90c0 16-4 26-14 38-14 18-30 36-46 44-14 6-21 2-21-12z" />
        <ellipse cx="261" cy="294" rx="13" ry="26" transform="rotate(22 261 294)" />
        <circle cx="414" cy="339" r="26" />
        <ellipse cx="414" cy="492" rx="25" ry="10" transform="rotate(-10 414 492)" />
      </g>
      <g stroke="#fff" strokeWidth="3" fill="none"><path d="M343 295v40M400 392l40 9M487 243l28 40" strokeWidth="4" /><path d="M333 200l20 18M508 415l14 20" strokeWidth="6" /></g>
      <g fill="none" strokeWidth="5">
        <path d="M228 475L335 381" stroke="#a9dfa9" /><path d="M228 475L264 443" stroke="#27a627" />
        <path d="M227 475V285" stroke="#3a35e0" /><path d="M227 475L417 530" stroke="#e03a35" />
      </g>
      <g fill="#444" fontSize="37" fontWeight="500">
        <text transform="matrix(1 .2 0 1.250 279 401)" textLength="94" lengthAdjust="spacingAndGlyphs">Front</text>
        <text transform="matrix(1 .22 -.45 .85 347 258)" textLength="62" lengthAdjust="spacingAndGlyphs">Top</text>
        <text transform="matrix(.7 -.5 0 1.250 453 418)" textLength="76" lengthAdjust="spacingAndGlyphs">Right</text>
      </g>
      <g fontSize="52" fontWeight="700"><text x="212" y="270" fill="#4a45e6" textLength="26" lengthAdjust="spacingAndGlyphs">Z</text><text x="437" y="558" fill="#e6504c" textLength="26" lengthAdjust="spacingAndGlyphs">X</text><text x="341" y="380" fontSize="48" fill="#b4e2b4" textLength="26" lengthAdjust="spacingAndGlyphs">Y</text></g>
      <g stroke="#333" strokeWidth="4" strokeLinejoin="round">
        <path d="M518 582l33-10 33 10v40l-33 15-33-15z" fill="#fff" /><path d="M519 583l32 10v43l-32-15z" fill="#999" stroke="none" /><path d="M551 593l32-10v38l-32 15z" fill="#d6d6d6" stroke="none" />
      </g>
      <path d="M615 598h30l-15 14z" fill="#222" />
    </svg>
  );
}

const GridMark = ({ c, l }: { c: string; l: string }) => (
  <g strokeLinecap="butt"><path d="M.5 .5h12v9H.5z" fill={c} stroke={c} /><path d="M1.500 3h2.700M5.200 3h2.700M9 3h2.700M1.500 7h2.700M5.200 7h2.700M9 7h2.700" stroke={l} strokeWidth="2.200" /></g>
);

function RightPanel() {
  return (
    <div className="absolute right-0 top-[274px] flex w-[40px] flex-col border-b border-l border-[#999] bg-white">
      {[
        <><path d="M1.500 17.500h22v6h-22z" fill="#fff" stroke="#666" /><path d="M3 17L13.500 1l5 3L8 17z" fill="#666" stroke="#777" /><path d="M7 17L20 7l4 4.500-6.500 6z" fill="#aaa" stroke="#888" /><path d="M9 17.500v6M17.500 17.500v6h6v-6z" fill="#ccc" stroke="#888" /><circle cx="5" cy="20.500" r="1" /></>,
        <><path d="M14 5l9.500 4v11l-9 4-9-4V9zM5.500 9l9 5 9-5M14.500 14v10" strokeWidth="1.600" fill="#fff" /><GridMark c="#1651b0" l="#7fb6f5" /></>,
        <><path d="M13 7l6.500 3v8l-7 3-7-3v-8zM5.500 10l7 4 7-4M12.500 14v7" strokeWidth="1.500" fill="#fff" /><path d="M3.500 9v3.500L1 14l2.500 1.500V21c0 1.500.5 2.500 2 2.500M19.500 3c2 0 2.500 1 2.500 2.500v6l2.500 2-2.500 2V21c0 1.500-.5 2.500-2 2.500" /><GridMark c="#333" l="#aaa" /></>,
        <><text x="6" y="19" fontSize="24" fontStyle="italic" fontWeight="bold" fontFamily="Liberation Serif, serif" fill="#333" stroke="none">x</text><path d="M3.500 7c-2.500 4-2.500 9 0 14M21.500 5c3 5 3 11 0 16" strokeWidth="2.200" /><GridMark c="#333" l="#aaa" /></>,
      ].map((g, i) => (
        <div key={i} className="flex h-[41.400px] items-center justify-center border-t border-[#999] pt-[2px]">
          <Ic className="h-[25px] w-[25px]" vb="0 0 25 25">{g}</Ic>
        </div>
      ))}
    </div>
  );
}

function Canvas() {
  return (
    <div className="relative flex-1 overflow-hidden bg-white">
      <Part />
      <ViewCube />
      <RightPanel />
      <div className="absolute bottom-[5px] left-[12px] flex items-center text-[17.500px] text-[#666]">
        <Ic className="mb-1 h-[24px] w-[24px]" vb="0 0 24 24">
          <path d="M1 11C4 7 7 5 9.500 4.500M23 11c-3-4-6-6-8.500-6.500M3.500 14.500C5.500 11 8 9 10 8.500M20.500 14.500C18.500 11 16 9 14 8.500M6.500 17C7.500 14.500 9 13 10.500 12.500M17.500 17c-1-2.500-2.500-4-4-4.500M9.500 19.500c.3-1.500 1-2 1.500-2.500M14.500 19.500c-.3-1.500-1-2-1.500-2.500" stroke="#666" strokeWidth="2" strokeLinecap="butt" />
          <path d="M8.800 2.500c0-2.500 6.400-2.500 6.400 0L13 17h-2z" fill="#c24a52" stroke="none" /><circle cx="12" cy="21.500" r="2.400" fill="#c24a52" stroke="none" />
        </Ic>
        <span className="ml-[7px] tracking-[-0.200px]">Poor connection...</span>
      </div>
      <div className="absolute bottom-[5px] right-[15px] flex items-center gap-[20px]">
        <Ic className="h-6 w-[21px]" vb="0 0 21 24"><path d="M1 12h6V8c0-5 13-5 13 0v9c0 2-1 3-3 3H1z" strokeWidth="1.700" /><ellipse cx="13.500" cy="8" rx="5.500" ry="3" strokeWidth="1.600" /><ellipse cx="13.500" cy="8" rx="2.500" ry="1" /><path d="M7 12h9M4 19v-3M7 19v-3M10 19v-3M13 19v-3" /></Ic>
        <Ic className="mr-[2px] h-6 w-[26px]" vb="0 0 25 24"><path d="M1 20v-3C1 1 24 1 24 17v3h-7c0-7-9-7-9 0z" strokeWidth="1.800" /><path d="M4 16C5 4 20 4 21 16" strokeWidth="2.200" strokeDasharray="1 1.800" stroke="#777" /><path d="M9 19.500c0-5 7-5 7 0" /></Ic>
        <Ic className="h-6 w-[18px]" vb="0 0 18 24"><path d="M1 19.500h16" strokeWidth="2.400" strokeLinecap="butt" /><path d="M9 4v13M2 4h14M3.500 4L.8 14h5.400zM14.500 4l-2.700 10h5.400zM4 17h10" strokeWidth="1.500" /><path d="M1 14h5M12 14h5" strokeWidth="2.400" /></Ic>
      </div>
    </div>
  );
}

function DocTabs() {
  return (
    <div className="flex h-[38px] bg-[#d6d6d6] text-[17.500px]">
      <div className="flex w-[49px] items-center justify-center pb-[2px] pr-[8px]">
        <svg viewBox="0 0 20 20" className="h-[19px] w-[19px]" stroke="#666" strokeWidth="3"><path d="M10 0v20M0 10h20" /></svg>
      </div>
      <div className="flex h-[35px] w-[250px] items-center rounded-b-[4px] border-b-[3px] border-[#1651b0] bg-white pl-[14px] text-[#333]">
        <Ic className="mt-[2px] h-6 w-[23px]"><path d="M1 8l2-1.500h6l3 3V23H4l-3-3z" stroke="#555" fill="#fff" /><path d="M1 8l3.500 2.500V23M4.500 10.500H12" stroke="#555" /><path d="M12 3l2-2h5l4 3.500V23h-7l-4-3z" stroke="#555" fill="#fff" /><path d="M12 3l4 3v17M16 6h7" stroke="#555" /></Ic>
        <span className="ml-[4px] pt-[4px] tracking-[-0.100px]">Part Studio 1</span>
      </div>
      <div className="ml-[2px] flex h-[34px] w-[250px] items-center rounded-b-[5px] bg-[#e9e9e9] pl-[13px] text-[#777]">
        <Ic><path d="M1.500 1.500h17l4 4v18H5.500l-4-4z" fill="#fff" /><path d="M1.500 1.500h12l3 4V17h-11l-4-4z" fill={G} /><path d="M5.500 5.500h17M5.500 5.500v18M1.500 1.500l4 4M13.500 1.500l3 4" /></Ic>
        <span className="ml-[5px] pt-[3px]">Assembly 1</span>
      </div>
    </div>
  );
}

/* ---------- Windows taskbar ---------- */

function Chrome() {
  return (
    <g transform="translate(0 1)">
      <circle cx="15" cy="15" r="15" fill="#fbc116" />
      <path d="M15 15L2 7.500A15 15 0 0 1 28 7.500H15z" fill="#e33b2e" />
      <path d="M2 7.500A15 15 0 0 0 15 30l6.500-11.200L8.500 18.800z" fill="#2f9e4a" />
      <circle cx="15" cy="15" r="7" fill="#fff" /><circle cx="15" cy="15" r="5.500" fill="#3b7de9" />
    </g>
  );
}
const Badge = ({ c }: { c: string }) => (
  <g><circle cx="25" cy="4" r="10" fill={c} /><text x="25" y="8.500" textAnchor="middle" fontSize="12" fill="#dfe9ee" fontFamily="Noto Sans, sans-serif">L</text></g>
);

const tiles: [string, string, number, number][] = [
  ["T", "#e6492f", 3, 5], ["I", "#f08a24", 12, 5],
  ["K", "#f0a01e", 3, 13.5], ["E", "#7fb83a", 12, 13.5], ["R", "#3aa648", 21, 13.5],
  ["C", "#2f7fd0", 3, 22], ["A", "#2f5fb8", 12, 22], ["D", "#2a4a98", 21, 22],
];

const apps: { g: React.ReactNode; dot?: boolean; active?: boolean }[] = [
  { g: <g><path d="M0 1h14.200v14.200H0z" fill="#6fd3fb" /><path d="M15.300 1H29.500v14.200H15.300z" fill="#44c6fa" /><path d="M0 16.300h14.200v14.200H0z" fill="#3bb9f7" /><path d="M15.300 16.300H29.500v14.200H15.300z" fill="#1ea3f5" /></g> },
  { g: <g fill="#4a4a4a" stroke="#e8e8e8" strokeWidth="2.600"><path d="M11 19l-8.500 9.500" strokeWidth="3.800" strokeLinecap="round" /><circle cx="17" cy="12.500" r="10.500" /></g> },
  { g: <g><path d="M7 1h23v21H7z" fill="#f0f0f0" /><path d="M0 9h22v21H0z" fill="#6c6c6c" opacity=".85" /><path d="M7 9h15v13H7z" fill="#a5a5a5" /></g> },
  { g: <g><rect y="1" width="30" height="29" rx="1.500" fill="#0f67b8" /><rect x="2" y="4" width="11.500" height="23" rx="1" fill="#f2f2f2" /><path d="M16 4h11.500v12.500H16z" fill="#62d4fb" /><path d="M16 17.500h11.500v4.500H16z" fill="#23a9f2" /><path d="M16 23h11.500v4H16z" fill="#148de0" /></g> },
  { g: <g><path d="M15 1a14 14 0 1 1-5 27.500L1 30l2-7A14 14 0 0 1 15 1z" fill="#6d67cf" /><path d="M15 1a14 14 0 0 1 14 14c-8 5-15-3-14-14z" fill="#6c8fe8" opacity=".6" /><rect x="7" y="9" width="11.500" height="12" rx="1.500" fill="#fff" /><path d="M20 13l4-3v10l-4-3z" fill="#fff" /></g> },
  { g: <g><path d="M0 3.500A1.500 1.500 0 0 1 1.500 2h8l3 3.500V10H0z" fill="#e0a010" /><path d="M0 7h30v22H0z" fill="#fdcb40" /><path d="M5 29v-5.500A2 2 0 0 1 7 21.500h16a2 2 0 0 1 2 2V29z" fill="#0f6fc5" /><path d="M8.500 25.500h13" stroke="#0a4d94" strokeWidth="1.500" /></g>, dot: true },
  { g: <g><path d="M8 7V2.500A1.300 1.300 0 0 1 9.300 1.200h11.400A1.300 1.300 0 0 1 22 2.500V7" fill="none" stroke="#2ea9e8" strokeWidth="1.900" /><path d="M.5 5.500h29V27a4 4 0 0 1-4 4h-21a4 4 0 0 1-4-4z" fill="#ececec" /><path d="M9 12h5.500v5.500H9z" fill="#f25022" /><path d="M15.500 12H21v5.500h-5.500z" fill="#7fba00" /><path d="M9 18.500h5.500V24H9z" fill="#00a4ef" /><path d="M15.500 18.500H21V24h-5.500z" fill="#ffb900" /></g> },
  { g: <g><rect width="30" height="30" rx="2" fill="#107c10" /><FaXbox x="2.500" y="2.500" size="25" color="#fff" /></g> },
  { g: <g><circle cx="15" cy="15" r="15" fill="#1a86d8" /><path d="M1 10C4 2 12-1 18 .5 26 2 30.500 9 30 15c-.5 5-5 6-8 5.500-3-.5-1.500-2-1.500-5C20 10 13 7 1 10z" fill="#4fd28c" /><path d="M1 10C4 2 12-1 18 .5 14 4 8 5 1 10z" fill="#2fb8d8" /><path d="M11 15c-2 8 4 14 15 10.500A15 15 0 0 1 13 30C5 28 7 18 11 15z" fill="#0e4f9e" /><path d="M12 15c1-3 5-4 8-1-1 3 0 5 2 6.500-6 2-10-1-10-5.500z" fill="#202020" /></g>, dot: true },
  { g: <g><path d="M1 10.500L4 7.500l18 14v8z" fill="#1490df" /><path d="M1 20.500L4 23.500 22 9V1z" fill="#0f78c8" /><path d="M21 0l8 4v23l-8 4z" fill="#2ba6f2" /></g>, dot: true },
  { g: <g><rect x="3.500" y="3" width="23" height="24" rx="5" fill="#f47a35" stroke="#111" strokeWidth="1.500" /><path d="M6 15l8-3 10-1-2 8-8 4-6-3z" fill="#f2f2f2" stroke="#111" strokeWidth="1.200" /><path d="M12 15l8-2-3 6-4 0z" fill="#3f7a3a" stroke="#111" strokeWidth=".8" /><path d="M6 9l9 1M20 4l5 5M7 22l6 3" stroke="#111" strokeWidth="1.500" /></g> },
  { g: <g><path d="M4 4h23v26H4z" fill="#5cc4e2" /><path d="M4 27h23v3.500H4z" fill="#b5561a" /><path d="M8 10h15M8 15h15M8 20h15" stroke="#14607c" strokeWidth="2" /><path d="M6 0v5M10 0v5M14 0v5M18 0v5M22 0v5M26 0v5" stroke="#5cc4e2" strokeWidth="1.800" /></g> },
  { g: <g><Chrome /><Badge c="#0288d1" /></g>, dot: true, active: true },
  { g: <g><Chrome /><Badge c="#455a64" /></g>, dot: true },
  { g: <g><rect x="1" y="3" width="28" height="24" rx="2" fill="#f5b912" /><path d="M4 6h22v18H4z" fill="#1f9d5d" /><circle cx="15" cy="12.500" r="2.400" fill="#fff" /><circle cx="9.500" cy="14" r="1.600" fill="#a6dcc0" /><circle cx="20.500" cy="14" r="1.600" fill="#a6dcc0" /><path d="M9 19.500c0-4 12-4 12 0z" fill="#fff" /><path d="M17 24h6v-1.500h-6z" fill="#fff" /></g> },
  { g: <g><path d="M0 0h30v30H0z" fill="#fff" /><rect x="21" y="5" width="7.500" height="7.500" fill="#f0b01e" />
      {tiles.map(([t, c, x, y]) => (
        <g key={t}><rect x={x} y={y} width="7.500" height="7.500" fill={c} /><text x={x + 3.75} y={y + 6.5} textAnchor="middle" fontSize="7.5" fontWeight="bold" fontFamily="Roboto, sans-serif" fill="#fff">{t}</text></g>
      ))}<Badge c="#0288d1" /></g>, dot: true },
  { g: <g><path d="M9 1h19v22l-6 6H2V9z" fill="#fff" /><path d="M9.500 3H26v19l-5 5H4V9.500z" fill="#1766ee" /><text x="15" y="22" textAnchor="middle" fontSize="19" fontWeight="bold" fontFamily="Roboto, sans-serif" fill="#fff">C</text></g>, dot: true },
  { g: <g><path d="M12 1h6l1 4.500 3.500 2L27 6l3 5-3 3.500v3L30 21l-3 5-4.500-1.500-3.500 2L18 30h-6l-1-3.500-3.500-2L3 26l-3-5 3-3.500v-3L0 11l3-5 4.500 1.500 3.500-2z" fill="#7c8896" /><circle cx="15" cy="15.500" r="7" fill="#e8eef4" /><circle cx="15" cy="15.500" r="5.500" fill="#1763b0" /></g>, dot: true },
  { g: <g><rect x="1" y="1" width="28" height="28" rx="4" fill="#27a0a4" /><g fill="none" stroke="#fff" strokeWidth="1.800"><circle cx="10" cy="15" r="4.500" /><circle cx="20" cy="15" r="4.500" /><path d="M8.500 15h3M18.500 15h3M20 13.500v3" strokeWidth="1.200" /></g></g>, dot: true },
];

function Taskbar() {
  return (
    <div className="flex h-[60px] items-center bg-[#202020] pl-[438px] font-['Noto_Sans',sans-serif] text-white">
      {apps.map((a, i) => (
        <div key={i} className="flex w-[55px] justify-center">
          <div className={`flex h-[50px] w-[49px] flex-col items-center rounded-[5px] pt-[9px] ${a.active ? "border border-[#383838] bg-[#2e2e2e]" : "border border-transparent"}`}>
            <svg viewBox="0 0 30 31" className="h-[31px] w-[30px] shrink-0 overflow-visible">{a.g}</svg>
            {a.dot && <i className={`mt-[4px] h-[4px] shrink-0 rounded-full ${a.active ? "w-5 bg-[#a9c7d2]" : "w-2 bg-[#9a9a9a]"}`} />}
          </div>
        </div>
      ))}
      <div className="ml-auto flex items-center pr-[25px]">
        <svg viewBox="0 0 16 10" className="h-[10px] w-4" fill="none" stroke="#fff" strokeWidth="1.500"><path d="M1 9l7-8 7 8" /></svg>
        <svg viewBox="0 0 22 18" className="ml-[17px] h-[17px] w-[21px]" fill="none" stroke="#fff" strokeWidth="1.600"><path d="M1 6.500c5.500-6.500 14.500-6.500 20 0M4 10c4-5 10-5 14 0M7 13c2.500-3 5.500-3 8 0" /><circle cx="11" cy="15.500" r="1.800" fill="#fff" stroke="none" /></svg>
        <svg viewBox="0 0 20 18" className="ml-[9px] h-[17px] w-[19px]" fill="none" stroke="#fff" strokeWidth="1.400"><path d="M1 6.500h3.500L9 2v14l-4.500-4.500H1zM12 6c1.500 2 1.500 4 0 6M14.500 3.500c3 3.500 3 7.500 0 11" /><path d="M17 1.500c4 4.500 4 10.500 0 15" stroke="#777" /></svg>
        <svg viewBox="0 0 22 18" className="ml-[11px] h-[18px] w-[22px]" fill="none" stroke="#fff" strokeWidth="1.600"><path d="M8 4h10.500v12H5v-5M21 8v4" /><path d="M9 7h6.500v6.500H9z" fill="#fff" /><path d="M2 1v3M6 1v3M1 4h6v2c0 3-6 3-6 0zM4 9v4" fill="#fff" /></svg>
        <div className="ml-[15px] w-[67px] text-right text-[14.500px] leading-5 tracking-[-0.500px]">
          <div className="whitespace-nowrap">1:16 PM</div>
          <div className="whitespace-nowrap">10/1/2025</div>
        </div>
        <span className="ml-[10px] flex h-5 w-5 items-center justify-center rounded-full bg-[#b4c8d0] text-[12px] text-[#1c1c1c]">4</span>
      </div>
    </div>
  );
}

export default function App() {
  return (
    <div className="flex h-[1080px] w-[1920px] flex-col overflow-hidden bg-white font-['Roboto',sans-serif]">
      <TabStrip />
      <AddressBar />
      <BookmarksBar />
      <DocHeader />
      <div className="flex min-h-0 flex-1">
        <LeftRail />
        <div className="flex min-w-0 flex-1 flex-col">
          <Toolbar />
          <div className="flex min-h-0 flex-1">
            <FeaturePanel />
            <Canvas />
          </div>
          <DocTabs />
        </div>
      </div>
      <Taskbar />
    </div>
  );
}
